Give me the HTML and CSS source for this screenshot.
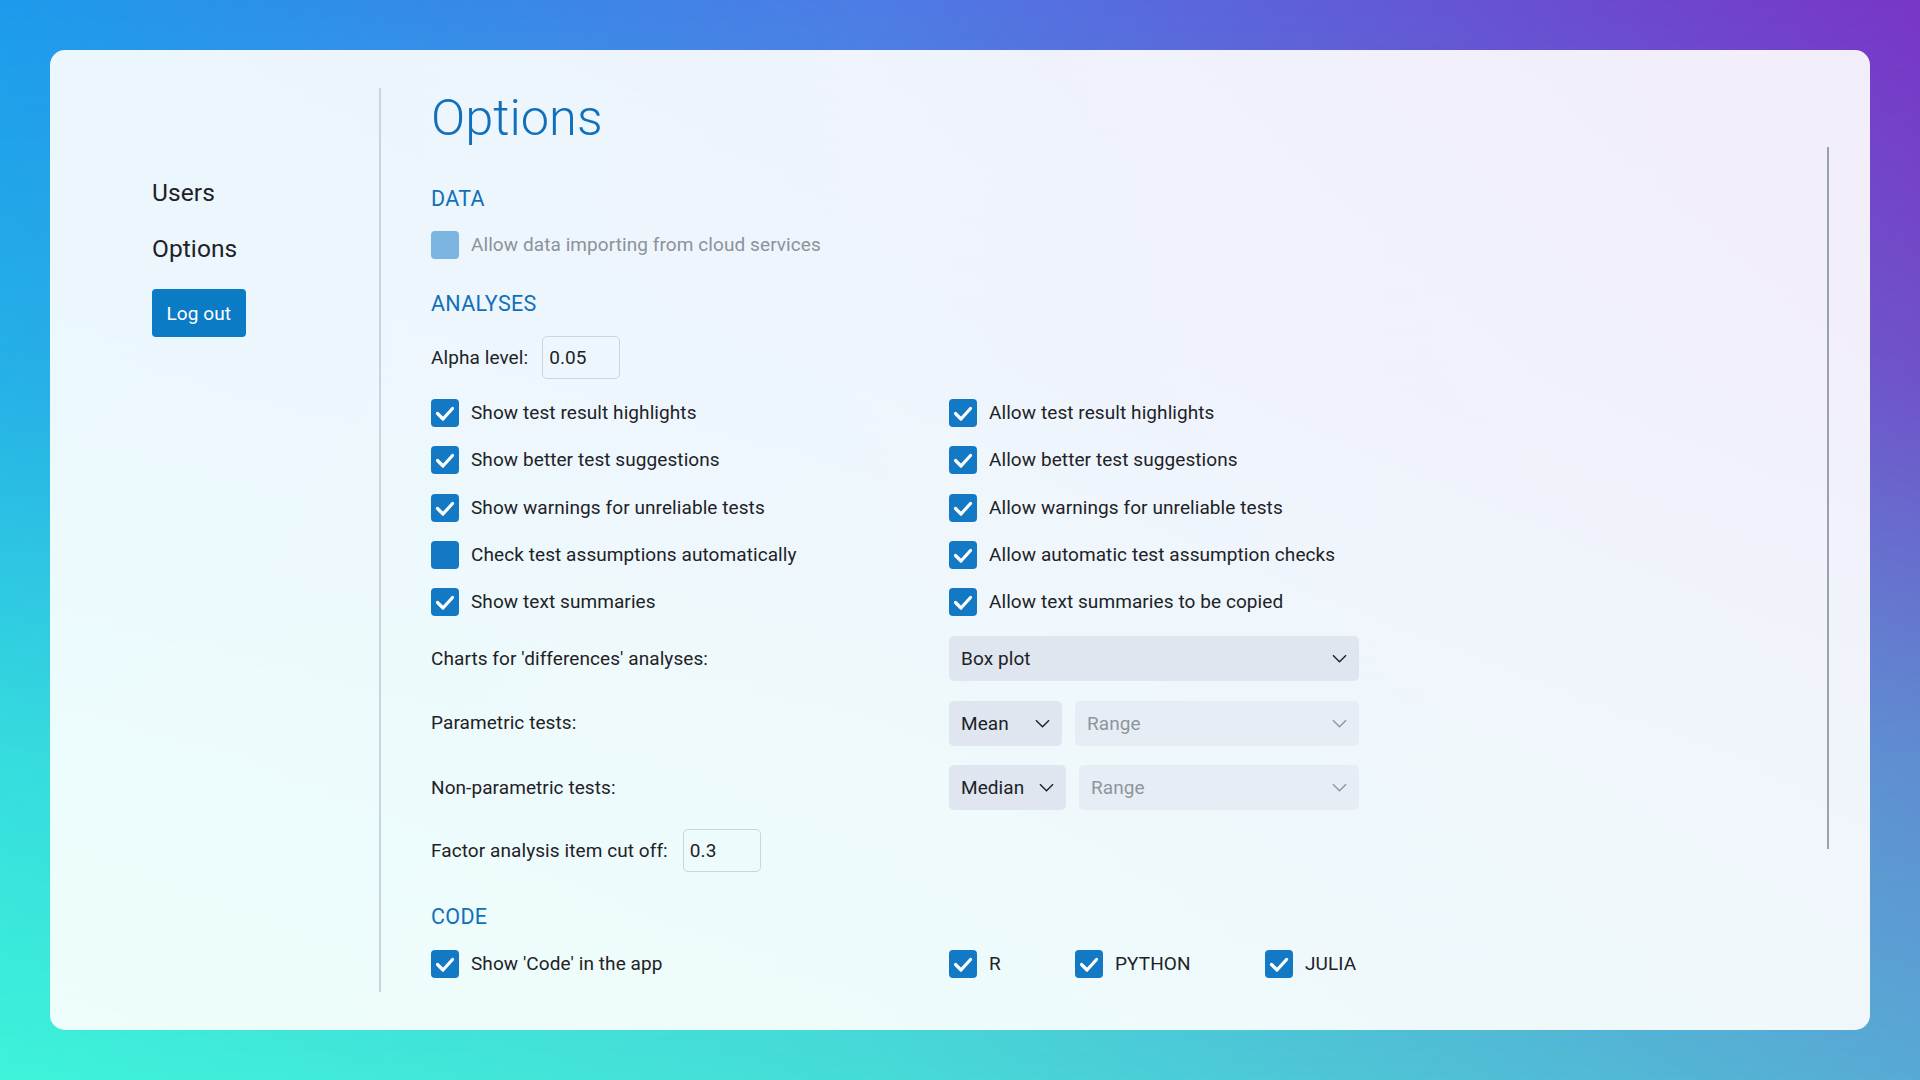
FILE: index.html
```html
<!DOCTYPE html>
<html lang="en">
<head>
<meta charset="utf-8">
<title>Options</title>
<link rel="stylesheet" href="styles.css">
</head>
<body>
<div class="bg">
  <div class="card">
    <aside class="side">
      <a class="nav">Users</a>
      <a class="nav">Options</a>
      <button class="logout">Log out</button>
    </aside>
    <div class="divider"></div>
    <main class="main">
      <h1 class="title">Options</h1>

      <h2 class="sec">DATA</h2>
      <div class="check disabled sec-first"><span class="box"></span><span class="lbl">Allow data importing from cloud services</span></div>

      <h2 class="sec sec-gap">ANALYSES</h2>
      <div class="field sec-first"><span class="lbl">Alpha level:</span><span class="input">0.05</span></div>

      <div class="grid">
        <div class="check"><span class="box on"><svg viewBox="0 0 28 28"><polyline points="6.5,14.5 12,20 21.5,9.5"/></svg></span><span class="lbl">Show test result highlights</span></div>
        <div class="check"><span class="box on"><svg viewBox="0 0 28 28"><polyline points="6.5,14.5 12,20 21.5,9.5"/></svg></span><span class="lbl">Allow test result highlights</span></div>
        <div class="check"><span class="box on"><svg viewBox="0 0 28 28"><polyline points="6.5,14.5 12,20 21.5,9.5"/></svg></span><span class="lbl">Show better test suggestions</span></div>
        <div class="check"><span class="box on"><svg viewBox="0 0 28 28"><polyline points="6.5,14.5 12,20 21.5,9.5"/></svg></span><span class="lbl">Allow better test suggestions</span></div>
        <div class="check"><span class="box on"><svg viewBox="0 0 28 28"><polyline points="6.5,14.5 12,20 21.5,9.5"/></svg></span><span class="lbl">Show warnings for unreliable tests</span></div>
        <div class="check"><span class="box on"><svg viewBox="0 0 28 28"><polyline points="6.5,14.5 12,20 21.5,9.5"/></svg></span><span class="lbl">Allow warnings for unreliable tests</span></div>
        <div class="check"><span class="box on"></span><span class="lbl">Check test assumptions automatically</span></div>
        <div class="check"><span class="box on"><svg viewBox="0 0 28 28"><polyline points="6.5,14.5 12,20 21.5,9.5"/></svg></span><span class="lbl">Allow automatic test assumption checks</span></div>
        <div class="check"><span class="box on"><svg viewBox="0 0 28 28"><polyline points="6.5,14.5 12,20 21.5,9.5"/></svg></span><span class="lbl">Show text summaries</span></div>
        <div class="check"><span class="box on"><svg viewBox="0 0 28 28"><polyline points="6.5,14.5 12,20 21.5,9.5"/></svg></span><span class="lbl">Allow text summaries to be copied</span></div>
      </div>

      <div class="selects">
        <span class="lbl">Charts for 'differences' analyses:</span>
        <div class="ctrls">
          <div class="dd full"><span>Box plot</span><svg class="chev" viewBox="0 0 16 9"><path d="M1 1 L8 8 L15 1"/></svg></div>
        </div>
        <span class="lbl">Parametric tests:</span>
        <div class="ctrls">
          <div class="dd w-mean"><span>Mean</span><svg class="chev" viewBox="0 0 16 9"><path d="M1 1 L8 8 L15 1"/></svg></div>
          <div class="dd off grow"><span>Range</span><svg class="chev" viewBox="0 0 16 9"><path d="M1 1 L8 8 L15 1"/></svg></div>
        </div>
        <span class="lbl">Non-parametric tests:</span>
        <div class="ctrls">
          <div class="dd w-median"><span>Median</span><svg class="chev" viewBox="0 0 16 9"><path d="M1 1 L8 8 L15 1"/></svg></div>
          <div class="dd off grow"><span>Range</span><svg class="chev" viewBox="0 0 16 9"><path d="M1 1 L8 8 L15 1"/></svg></div>
        </div>
      </div>

      <div class="field factor"><span class="lbl">Factor analysis item cut off:</span><span class="input">0.3</span></div>

      <h2 class="sec sec-gap">CODE</h2>
      <div class="coderow">
        <div class="check"><span class="box on"><svg viewBox="0 0 28 28"><polyline points="6.5,14.5 12,20 21.5,9.5"/></svg></span><span class="lbl">Show 'Code' in the app</span></div>
        <div class="langs">
          <div class="check"><span class="box on"><svg viewBox="0 0 28 28"><polyline points="6.5,14.5 12,20 21.5,9.5"/></svg></span><span class="lbl">R</span></div>
          <div class="check"><span class="box on"><svg viewBox="0 0 28 28"><polyline points="6.5,14.5 12,20 21.5,9.5"/></svg></span><span class="lbl">PYTHON</span></div>
          <div class="check"><span class="box on"><svg viewBox="0 0 28 28"><polyline points="6.5,14.5 12,20 21.5,9.5"/></svg></span><span class="lbl">JULIA</span></div>
        </div>
      </div>
    </main>
    <div class="scroll"></div>
  </div>
</div>
</body>
</html>
```

FILE: styles.css
```css
* { box-sizing: border-box; }
html, body { margin: 0; padding: 0; }
body {
  font-family: Roboto, "Noto Sans", "Liberation Sans", sans-serif;
  color: #1e2226;
  font-size: 19px;
  letter-spacing: 0.08px;
}
.bg {
  position: relative;
  width: 1920px;
  height: 1080px;
  padding: 50px;
  background: linear-gradient(to right, #3ef3da 0%, #46dcd8 45%, #58aad5 100%);
  overflow: hidden;
}
.bg::before {
  content: "";
  position: absolute;
  inset: 0;
  background: linear-gradient(to right, #1d9aeb 0%, #4d7ce4 45%, #7835c6 100%);
  -webkit-mask-image: linear-gradient(to bottom, #000 0%, rgba(0,0,0,.75) 35%, rgba(0,0,0,.25) 70%, transparent 100%);
  mask-image: linear-gradient(to bottom, #000 0%, rgba(0,0,0,.75) 35%, rgba(0,0,0,.25) 70%, transparent 100%);
}
.card {
  position: relative;
  z-index: 1;
  display: flex;
  height: 980px;
  border-radius: 15px;
  background: rgba(255, 255, 255, 0.91);
}
.side {
  width: 329px;
  padding: 127px 0 0 102px;
  display: flex;
  flex-direction: column;
  align-items: flex-start;
  gap: 24px;
}
.nav {
  font-size: 24.5px;
  line-height: 32px;
  color: #1e2226;
}
.logout {
  height: 48px;
  padding: 0 14.5px;
  border: 0;
  border-radius: 4px;
  background: #0b7bc5;
  color: #fff;
  font-family: inherit;
  font-size: 19px;
  letter-spacing: 0.1px;
}
.divider {
  width: 2px;
  margin: 38px 0;
  background: #cbd4de;
}
.main {
  flex: 1;
  padding: 37px 0 0 50px;
}
.title {
  margin: 0;
  font-size: 50.5px;
  line-height: 62px;
  font-weight: 300;
  color: #1170b9;
  letter-spacing: 0;
}
.sec {
  margin: 38px 0 0;
  font-size: 21.5px;
  line-height: 24px;
  font-weight: 400;
  letter-spacing: 0.3px;
  color: #1170b9;
}
.sec-gap { margin-top: 33px; }
.sec-first { margin-top: 20px; }
.check {
  display: flex;
  align-items: center;
  gap: 12px;
  height: 28px;
}
.lbl { line-height: 28px; white-space: nowrap; }
.box {
  width: 28px;
  height: 28px;
  flex: none;
  border-radius: 4px;
  display: flex;
}
.box.on { background: #1479c4; }
.box svg { width: 28px; height: 28px; }
.box polyline {
  fill: none;
  stroke: #fff;
  stroke-width: 3.2;
  stroke-linecap: round;
  stroke-linejoin: round;
}
.disabled .box { background: #7cb5df; }
.disabled .lbl { color: #8c9299; }
.field {
  display: flex;
  align-items: center;
  gap: 14px;
  height: 43px;
}
.input {
  width: 78px;
  height: 43px;
  padding: 0 6px;
  display: flex;
  align-items: center;
  border: 1.5px solid #cdd4dc;
  border-radius: 5px;
}
.grid {
  margin-top: 20px;
  display: grid;
  grid-template-columns: 518px 410px;
  row-gap: 19.25px;
}
.selects {
  margin-top: 20px;
  display: grid;
  grid-template-columns: 518px 410px;
  grid-auto-rows: 45px;
  row-gap: 19.5px;
  align-items: center;
}
.ctrls {
  display: flex;
  gap: 13px;
  height: 45px;
}
.dd {
  display: flex;
  align-items: center;
  padding: 0 12px;
  height: 45px;
  border-radius: 5px;
  background: #dfe6ef;
}
.dd .chev {
  margin-left: auto;
  width: 15px;
  height: 9px;
  fill: none;
  stroke: #1e2226;
  stroke-width: 1.5;
}
.dd.full { width: 410px; }
.w-mean { width: 113px; }
.w-median { width: 117px; }
.dd.grow { flex: 1; }
.dd.off { background: #e7edf4; color: #8f959c; }
.dd.off .chev { stroke: #8f959c; }
.factor { margin-top: 19px; }
.factor .lbl { margin-right: 1px; }
.coderow {
  margin-top: 21px;
  display: grid;
  grid-template-columns: 518px 410px;
}
.langs {
  display: grid;
  grid-template-columns: 126px 190px auto;
}
.scroll {
  width: 2px;
  height: 702px;
  margin: 97px 41px 0 0;
  background: #9aa3ad;
  align-self: flex-start;
}
```
